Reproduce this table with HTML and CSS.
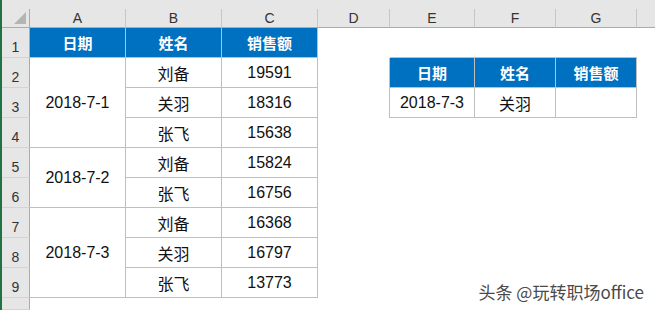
FILE: index.html
```html
<!DOCTYPE html>
<html lang="zh-CN">
<head>
<meta charset="utf-8">
<title>Sheet</title>
<link rel="stylesheet" href="styles.css">
</head>
<body>
<div class="sheet">
  <div class="edge"></div>
  <div class="grid">
    <div class="strip"></div>

    <div class="corner"><svg class="tri" width="12" height="12" viewBox="0 0 12 12"><polygon points="0,12 12,0 12,12" fill="#b4b4b4"/></svg></div>
    <div class="colhdr">A</div>
    <div class="colhdr">B</div>
    <div class="colhdr">C</div>
    <div class="colhdr">D</div>
    <div class="colhdr">E</div>
    <div class="colhdr">F</div>
    <div class="colhdr">G</div>
    <div class="colhdr last"></div>

    <!-- row 1 -->
    <div class="rowhdr">1</div>
    <div class="cell head">日期</div>
    <div class="cell head">姓名</div>
    <div class="cell head">销售额</div>
    <div class="blank"></div>
    <div class="blank bb"></div>
    <div class="blank bb"></div>
    <div class="blank bb"></div>
    <div class="blank"></div>

    <!-- row 2 -->
    <div class="rowhdr">2</div>
    <div class="cell span3">2018-7-1</div>
    <div class="cell">刘备</div>
    <div class="cell">19591</div>
    <div class="blank br"></div>
    <div class="cell head">日期</div>
    <div class="cell head">姓名</div>
    <div class="cell head">销售额</div>
    <div class="blank"></div>

    <!-- row 3 -->
    <div class="rowhdr">3</div>
    <div class="cell">关羽</div>
    <div class="cell">18316</div>
    <div class="blank br"></div>
    <div class="cell">2018-7-3</div>
    <div class="cell">关羽</div>
    <div class="cell"></div>
    <div class="blank"></div>

    <!-- row 4 -->
    <div class="rowhdr">4</div>
    <div class="cell">张飞</div>
    <div class="cell">15638</div>
    <div class="blank rest"></div>

    <!-- row 5 -->
    <div class="rowhdr">5</div>
    <div class="cell span2">2018-7-2</div>
    <div class="cell">刘备</div>
    <div class="cell">15824</div>
    <div class="blank rest"></div>

    <!-- row 6 -->
    <div class="rowhdr">6</div>
    <div class="cell">张飞</div>
    <div class="cell">16756</div>
    <div class="blank rest"></div>

    <!-- row 7 -->
    <div class="rowhdr">7</div>
    <div class="cell span3">2018-7-3</div>
    <div class="cell">刘备</div>
    <div class="cell">16368</div>
    <div class="blank rest"></div>

    <!-- row 8 -->
    <div class="rowhdr">8</div>
    <div class="cell">关羽</div>
    <div class="cell">16797</div>
    <div class="blank rest"></div>

    <!-- row 9 -->
    <div class="rowhdr">9</div>
    <div class="cell">张飞</div>
    <div class="cell">13773</div>
    <div class="blank rest"></div>

    <!-- row 10 -->
    <div class="rowhdr"></div>
    <div class="blank all"></div>
  </div>
  <div class="watermark">头条 @玩转职场office</div>
</div>
</body>
</html>
```

FILE: styles.css
```css
* { box-sizing: border-box; }

html, body {
  margin: 0;
  padding: 0;
  background: #ffffff;
}

.sheet {
  position: relative;
  display: flex;
  width: 655px;
  height: 310px;
  overflow: hidden;
  font-family: "Liberation Sans", "Noto Sans CJK SC", sans-serif;
}

.edge {
  width: 2px;
  flex: none;
  background: #217346;
}

.grid {
  flex: 1;
  display: grid;
  grid-template-columns: 28px 96px 96px 96px 72px 85px 81px 81px 1fr;
  grid-template-rows: 9px 19px repeat(9, 30px) 1fr;
}

.strip {
  grid-column: 1 / -1;
  background: #e6e6e6;
}

.corner {
  position: relative;
  background: #e6e6e6;
  border-right: 1px solid #ababab;
  border-bottom: 1px solid #ababab;
}

.tri {
  position: absolute;
  right: 3px;
  bottom: 3px;
}

.colhdr {
  background: #e6e6e6;
  border-right: 1px solid #c6c6c6;
  border-bottom: 1px solid #ababab;
  display: flex;
  align-items: flex-end;
  justify-content: center;
  padding-bottom: 1px;
  font-size: 14px;
  line-height: 16px;
  color: #333333;
}

.colhdr.last {
  border-right: none;
}

.rowhdr {
  background: #e6e6e6;
  border-right: 1px solid #ababab;
  border-bottom: 1px solid #d4d4d4;
  display: flex;
  align-items: flex-end;
  justify-content: center;
  padding-bottom: 2px;
  font-size: 14px;
  line-height: 16px;
  color: #333333;
}

.cell {
  border-right: 1px solid #bfbfbf;
  border-bottom: 1px solid #bfbfbf;
  display: flex;
  align-items: center;
  justify-content: center;
  font-size: 16px;
  color: #111111;
  font-family: "Liberation Sans", "Noto Sans CJK SC", sans-serif;
}

.cell.head {
  background: #0070c0;
  color: #ffffff;
  font-weight: bold;
  font-size: 15px;
}

.span3 { grid-row: span 3; }
.span2 { grid-row: span 2; }

.blank { background: #ffffff; }
.blank.bb { border-bottom: 1px solid #bfbfbf; }
.blank.br { border-right: 1px solid #bfbfbf; }
.blank.rest { grid-column: span 5; }
.blank.all { grid-column: span 8; }

.watermark {
  position: absolute;
  right: 11px;
  bottom: 8px;
  font-family: "Noto Sans CJK SC", sans-serif;
  font-size: 17px;
  line-height: 20px;
  color: #4a4a4a;
  text-shadow: 0 0 1px #ffffff, 0 0 2px #ffffff;
}
```
